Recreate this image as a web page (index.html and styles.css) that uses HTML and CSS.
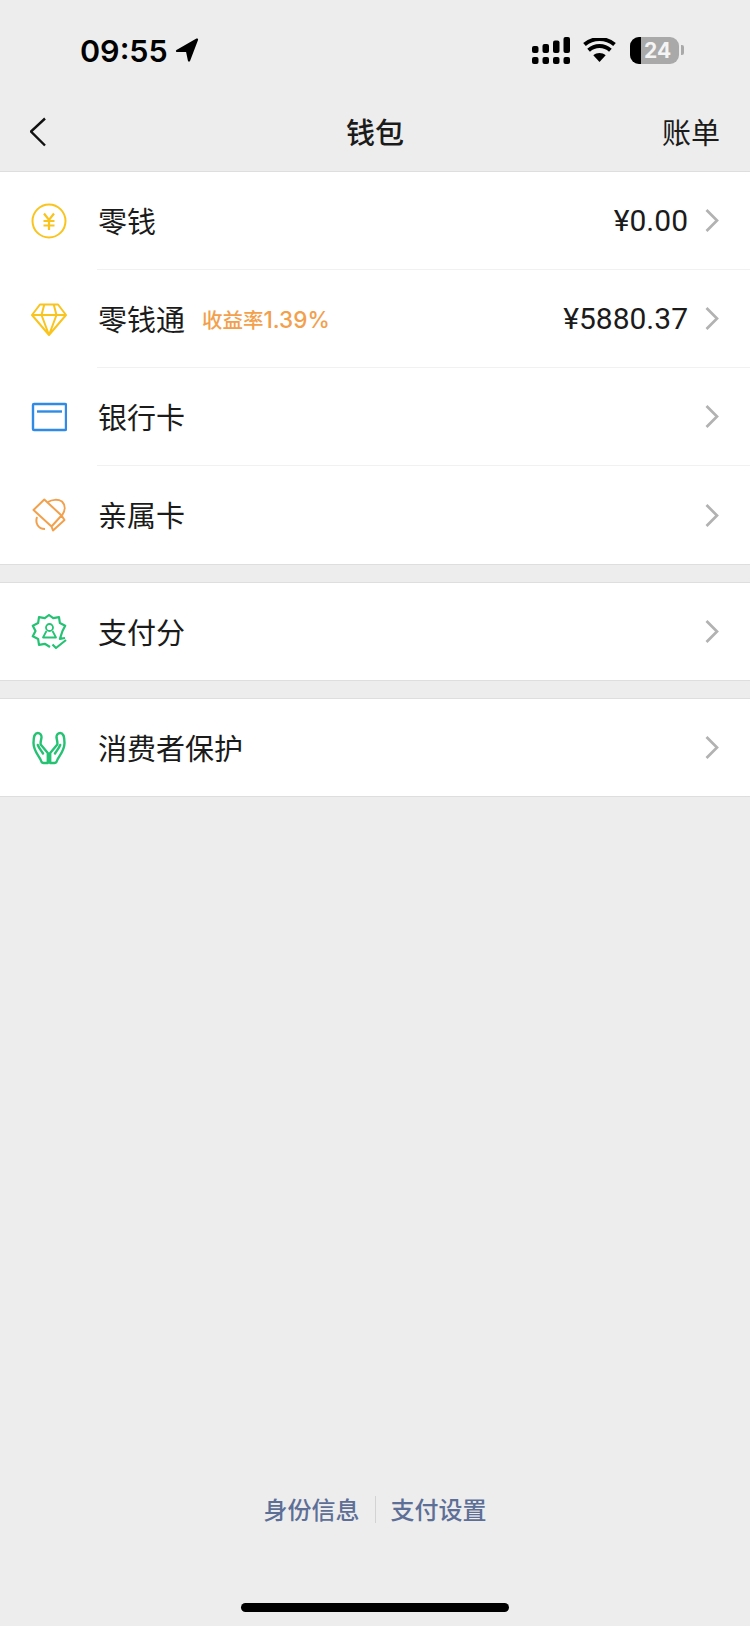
FILE: index.html
```html
<!DOCTYPE html>
<html lang="zh-CN">

<head>
    <meta charset="UTF-8">
    <meta name="viewport" content="width=device-width, initial-scale=1.0">
    <title>钱包</title>
    <link rel="stylesheet" href="styles.css">
</head>

<body>
    <!-- 状态栏 -->
    <div class="status-bar">
        <div class="status-left">
            <span class="clock">09:55</span>
            <svg class="loc-icon" viewBox="0 0 24 24">
                <path d="M22 1.500 2 13h10l2 9.500z" fill="#000" stroke="#000" stroke-width="2.200" stroke-linejoin="round" />
            </svg>
        </div>
        <div class="status-right">
            <svg class="signal-icon" viewBox="0 0 38 27" fill="#000">
                <rect x="0" y="20" width="6.500" height="7" rx="2" />
                <rect x="10.500" y="20" width="6.500" height="7" rx="2" />
                <rect x="21" y="20" width="6.500" height="7" rx="2" />
                <rect x="31.500" y="20" width="6.500" height="7" rx="2" />
                <rect x="0" y="9" width="6.500" height="7" rx="2" />
                <rect x="10.500" y="7" width="6.500" height="9" rx="2" />
                <rect x="21" y="3.500" width="6.500" height="12.500" rx="2" />
                <rect x="31.500" y="0" width="6.500" height="16" rx="2" />
            </svg>
            <svg class="wifi-icon" viewBox="0 0 33 24">
                <path d="M16.500 24 10.300 17.300c3.600-3 8.800-3 12.400 0z" fill="#000" />
                <path d="M5.600 12.300c6.200-5.600 15.600-5.600 21.800 0M1.500 6.600c8.600-7.400 21.400-7.400 30 0" fill="none" stroke="#000" stroke-width="4" />
            </svg>
            <div class="battery">
                <div class="battery-fill"></div>
                <span class="battery-num">24</span>
            </div>
            <div class="battery-nub"></div>
        </div>
    </div>

    <!-- 导航栏 -->
    <div class="nav-bar">
        <div class="nav-back">
            <svg class="back-icon" viewBox="0 0 18 30">
                <path d="M15 1.500 1 14.500 15 28.500" fill="none" stroke="#111" stroke-width="2.400" />
            </svg>
        </div>
        <div class="nav-title">钱包</div>
        <div class="nav-action">账单</div>
    </div>

    <!-- 钱包入口 -->
    <div class="group group-first">
        <div class="row">
            <svg class="row-icon" viewBox="0 0 36 36" fill="none" stroke="#f9c41e" stroke-width="2">
                <circle cx="18" cy="18" r="16.500" />
                <path d="M13 10.500l5 6.500 5-6.500M18 17v10M12.500 18h11M12.500 22.500h11" stroke-width="2.200" />
            </svg>
            <div class="row-body">
                <span class="row-name">零钱</span>
                <span class="row-amount">¥0.00</span>
                <svg class="arrow" viewBox="0 0 14 23">
                    <path d="M1.500 1 12 11.500 1.500 22" />
                </svg>
            </div>
        </div>
        <div class="row">
            <svg class="row-icon" viewBox="0 0 36 36" fill="none" stroke="#f9c41e" stroke-width="2" stroke-linejoin="round">
                <path d="M9 3.500h18l8 10.500-17 20L1 14zM1 14h34M13.300 3.500 10.500 14 18 34 25.500 14 22.700 3.500" />
            </svg>
            <div class="row-body">
                <span class="row-name">零钱通</span>
                <span class="row-rate">收益率<span class="rate-num">1.39%</span></span>
                <span class="row-amount">¥5880.37</span>
                <svg class="arrow" viewBox="0 0 14 23">
                    <path d="M1.500 1 12 11.500 1.500 22" />
                </svg>
            </div>
        </div>
        <div class="row">
            <svg class="row-icon" viewBox="0 0 36 36" fill="none" stroke="#2f8be6" stroke-width="2.400">
                <rect x="2" y="5" width="33" height="26" rx="1" />
                <path d="M6 12.500h25" />
            </svg>
            <div class="row-body">
                <span class="row-name">银行卡</span>
                <svg class="arrow" viewBox="0 0 14 23">
                    <path d="M1.500 1 12 11.500 1.500 22" />
                </svg>
            </div>
        </div>
        <div class="row row-last">
            <svg class="row-icon" viewBox="0 0 36 36" fill="none" stroke="#f2a04c" stroke-width="2" stroke-linejoin="round">
                <path d="M2.500 13 13.300 2.500 30.500 18.500 20.500 29.500zM20.500 29.500l1.500 4L33.500 23l-3-4.500" />
                <path d="M17 5c4-2.500 10-3 14-.5 3.500 3.500 3.500 9 0 14M6 20c-2 6 1 12 8 12" />
            </svg>
            <div class="row-body">
                <span class="row-name">亲属卡</span>
                <svg class="arrow" viewBox="0 0 14 23">
                    <path d="M1.500 1 12 11.500 1.500 22" />
                </svg>
            </div>
        </div>
    </div>

    <div class="group">
        <div class="row row-last">
            <svg class="row-icon" viewBox="0 0 36 36" fill="none" stroke="#25c274" stroke-width="2.200" stroke-linejoin="round">
                <path d="M34 24 28.900 24.900 31.500 17 34.200 11.700 28.900 9.100 28 3.200 22.200 4.200 18 1 13.800 4.200 8 3.200 7.100 9.100 1.800 11.700 4.500 17 1.800 22.300 7.100 24.900 8 30.800 13.800 29.800 19 33" />
                <path d="M21.500 30.500l3.500 3.500 10-8" />
                <circle cx="18.500" cy="13.500" r="3.500" stroke-width="1.800" />
                <path d="M15.500 17 12 23.500h13L21.500 17" stroke-width="1.800" />
            </svg>
            <div class="row-body">
                <span class="row-name">支付分</span>
                <svg class="arrow" viewBox="0 0 14 23">
                    <path d="M1.500 1 12 11.500 1.500 22" />
                </svg>
            </div>
        </div>
    </div>

    <div class="group">
        <div class="row row-last">
            <svg class="row-icon" viewBox="0 0 36 36" fill="none" stroke="#25c274" stroke-width="2.400" stroke-linejoin="round" stroke-linecap="round">
                <!-- 左手 -->
                <path d="M16.800 33H12.500c-1.500 0-2.300-1-3-3.500C7.500 25.500 2.500 20.500 2.500 13 2.500 7.500 4 3 6.800 3c2.200 0 3.900 2 3.700 4.500-.3 2.500-1.300 4.500-.8 7l7.100 8.500zM6.800 15c1 2.800 3 5 5.200 8.500" />
                <!-- 右手 -->
                <path d="M19.200 33h4.300c1.500 0 2.300-1 3-3.500 2-4 7-9 7-16.500C33.500 7.500 32 3 29.200 3 27 3 25.300 5 25.500 7.500c.3 2.500 1.300 4.500.8 7L19.200 23zM29.200 15c-1 2.800-3 5-5.200 8.500" />
            </svg>
            <div class="row-body">
                <span class="row-name">消费者保护</span>
                <svg class="arrow" viewBox="0 0 14 23">
                    <path d="M1.500 1 12 11.500 1.500 22" />
                </svg>
            </div>
        </div>
    </div>

    <!-- 底部链接 -->
    <div class="footer-links">
        <span class="footer-link">身份信息</span>
        <i class="footer-sep"></i>
        <span class="footer-link">支付设置</span>
    </div>
    <div class="home-bar"></div>
</body>

</html>
```

FILE: styles.css
```css
* {
    box-sizing: border-box;
}

body {
    display: flex;
    flex-direction: column;
    height: 1626px;
    margin: 0;
    background-color: #ededed;
    color: #1b1b1b;
    font-family: "Noto Sans CJK SC", sans-serif;
}

/* 状态栏 */
.status-bar {
    display: flex;
    justify-content: space-between;
    align-items: center;
    height: 92px;
    padding: 8px 66px 0 80px;
}

.status-left,
.status-right {
    display: flex;
    align-items: center;
}

.clock {
    font-family: Inter, sans-serif;
    font-size: 30.500px;
    font-weight: 600;
    color: #000;
}

.loc-icon {
    width: 24px;
    height: 24px;
    margin-left: 7px;
}

.signal-icon {
    width: 38px;
    height: 27px;
}

.wifi-icon {
    width: 33px;
    height: 24px;
    margin-left: 13px;
}

.battery {
    display: flex;
    align-items: center;
    width: 49px;
    height: 27px;
    margin-left: 14px;
    overflow: hidden;
    border-radius: 9px;
    background-color: #a9a9a9;
}

.battery-fill {
    width: 11px;
    height: 100%;
    background-color: #000;
}

.battery-num {
    margin-left: 3px;
    font-family: Inter, sans-serif;
    font-size: 21px;
    font-weight: 700;
    color: #f4f4f4;
}

.battery-nub {
    width: 3px;
    height: 10px;
    margin-left: 2px;
    border-radius: 0 2px 2px 0;
    background-color: #a9a9a9;
}

/* 导航栏 */
.nav-bar {
    display: grid;
    grid-template-columns: 1fr auto 1fr;
    align-items: center;
    height: 80px;
    padding: 0 30px;
    border-bottom: 1px solid #dedede;
}

.back-icon {
    display: block;
    width: 18px;
    height: 30px;
}

.nav-title {
    padding-bottom: 2px;
    font-size: 29px;
    font-weight: 500;
}

.nav-action {
    padding-bottom: 2px;
    font-size: 29px;
    text-align: right;
}

/* 列表 */
.group {
    margin-top: 17px;
    border-top: 1px solid #dedede;
    border-bottom: 1px solid #dedede;
    background-color: #fff;
}

.group-first {
    margin-top: 0;
    border-top: none;
}

.row {
    display: flex;
    align-items: center;
    padding-left: 31px;
}

.row-icon {
    flex: none;
    width: 36px;
    height: 36px;
}

.row-body {
    display: flex;
    flex: 1;
    align-items: center;
    height: 97px;
    margin-left: 30px;
    padding-right: 31px;
}

.group-first .row-body {
    height: 98px;
    border-bottom: 1px solid #f1f1f1;
}

.group-first .row-last .row-body {
    border-bottom: none;
}

.row-name {
    padding: 0 0 2px 1px;
    font-size: 29px;
}

.row-rate {
    margin-left: 17px;
    font-size: 20.500px;
    font-weight: 500;
    color: #f2a04c;
}

.rate-num {
    font-family: Inter, sans-serif;
    font-size: 22.500px;
}

.row-amount {
    margin-left: auto;
    font-family: Roboto, sans-serif;
    font-size: 30px;
}

.arrow {
    flex: none;
    width: 14px;
    height: 23px;
    margin-left: 17px;
    fill: none;
    stroke: #b2b2b2;
    stroke-width: 2.700;
}

.row-body > .row-name + .arrow {
    margin-left: auto;
}

/* 底部 */
.footer-links {
    display: flex;
    justify-content: center;
    align-items: center;
    height: 27px;
    margin-top: auto;
    margin-bottom: 80px;
    font-size: 24px;
    font-weight: 500;
    color: #5d6f97;
}

.footer-link {
    padding-bottom: 2px;
}

.footer-sep {
    width: 1px;
    height: 27px;
    margin: 0 15px;
    background-color: #d3d3d3;
}

.home-bar {
    flex: none;
    width: 268px;
    height: 9px;
    margin: 0 auto 14px;
    border-radius: 5px;
    background-color: #000;
}
```
